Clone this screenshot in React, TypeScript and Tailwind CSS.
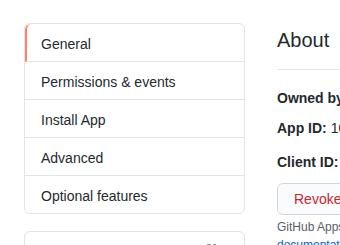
import React from "react";

const items = ["General", "Permissions & events", "Install App", "Advanced", "Optional features"];

export default function App() {
    return (
        <div className="w-[340px] h-[245px] overflow-hidden bg-white text-[#24292e] text-sm" style={{ fontFamily: '"Liberation Sans", Arial, sans-serif' }}>
            <div className="flex pl-6 pt-[23px] gap-[32px] w-[900px]">
                {/* Sidebar */}
                <div className="w-[221px] shrink-0">
                    <nav className="border border-[#e1e4e8] rounded-md">
                        {items.map((label, i) => (
                            <div
                                key={label}
                                className={
                                    i === 0
                                        ? "border-l-2 border-l-[#f9826c] pl-[14px] pt-[10px] pb-[6px] leading-[21px] border-b border-b-[#e1e4e8] rounded-tl-md"
                                        : i === items.length - 1
                                        ? "pl-4 pt-[10px] pb-[6px] leading-[21px]"
                                        : "pl-4 pt-[10px] pb-[6px] leading-[21px] border-b border-[#e1e4e8]"
                                }
                            >
                                {label}
                            </div>
                        ))}
                    </nav>
                    <div className="mt-[17px] border border-[#e1e4e8] rounded-md h-[60px] flex justify-end pt-[12px] pr-[27px]">
                        <svg width="10" height="10" viewBox="0 0 10 10" className="text-[#959da5]">
                            <rect x="0" y="0" width="4" height="1.5" fill="currentColor" />
                            <rect x="6" y="0" width="3" height="2" fill="currentColor" />
                            <rect x="3" y="3" width="4" height="4" fill="currentColor" />
                        </svg>
                    </div>
                </div>

                {/* Main */}
                <div className="w-[600px]">
                    <h2 className="mt-[2px] text-[20px] leading-[30px] font-normal pb-[14px] border-b border-[#e1e4e8]">About</h2>
                    <p className="mt-[18px] leading-[21px] font-bold">
                        Owned by: <span className="font-normal text-[#0366d6]">@octo-org</span>
                    </p>
                    <p className="mt-[9px] leading-[21px]">
                        <span className="font-bold">App ID:</span> 104831
                    </p>
                    <p className="mt-[13px] leading-[21px]">
                        <span className="font-bold">Client ID:</span> Iv1.8a61f9b3a7aba766
                    </p>
                    <button className="mt-[10px] h-8 px-4 rounded-md border border-[#d1d5da] bg-[#fafbfc] text-[#cb2431] leading-[20px]">
                        Revoke all user tokens
                    </button>
                    <p className="mt-[3px] text-xs leading-[18px] text-[#586069]">
                        GitHub Apps can use OAuth credentials to identify users. Learn more about identifying users by reading our
                        <br />
                        <a className="text-[#0366d6]">documentation</a>.
                    </p>
                </div>
            </div>
        </div>
    );
}
